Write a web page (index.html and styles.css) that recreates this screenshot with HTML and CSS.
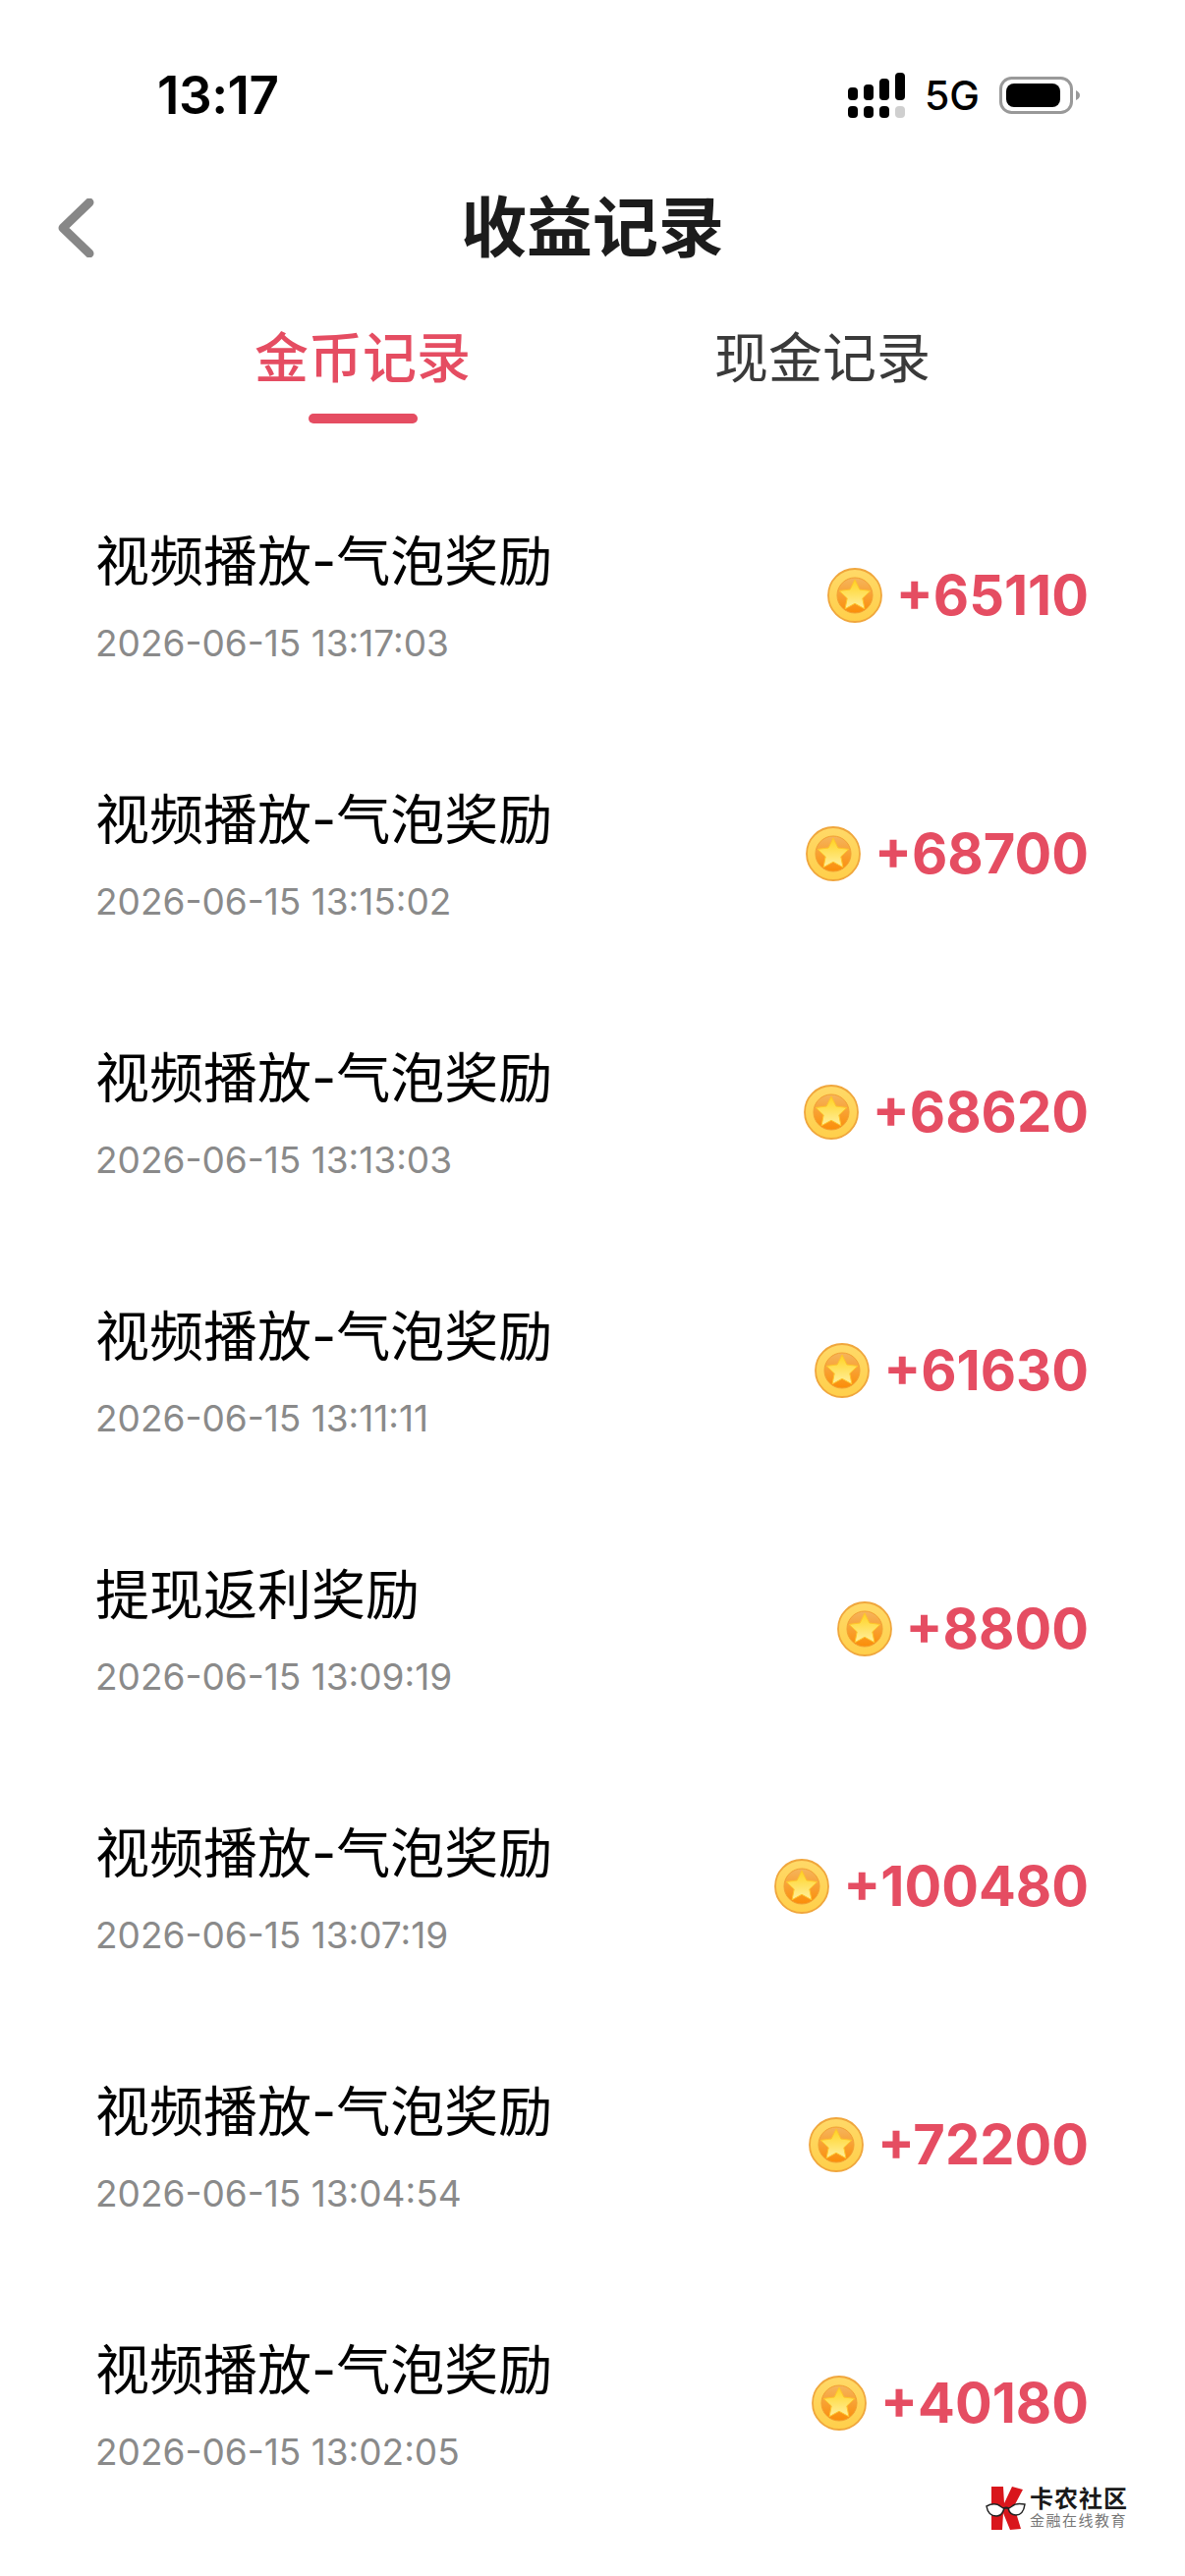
FILE: index.html
```html
<!DOCTYPE html>
<html lang="zh-CN">
<head>
    <meta charset="UTF-8">
    <meta name="viewport" content="width=device-width, initial-scale=1.0">
    <title>收益记录</title>
    <link rel="stylesheet" href="styles.css">
</head>
<body>
    <svg class="defs" width="0" height="0">
        <defs>
            <linearGradient id="coinRim" x1="0" y1="0" x2="0" y2="1">
                <stop offset="0" stop-color="#ffd968"/>
                <stop offset="1" stop-color="#ffcf4a"/>
            </linearGradient>
            <linearGradient id="coinCore" x1="0" y1="0" x2="0" y2="1">
                <stop offset="0" stop-color="#f5b45c"/>
                <stop offset="1" stop-color="#fb8d08"/>
            </linearGradient>
            <linearGradient id="coinStar" x1="0" y1="0" x2="0" y2="1">
                <stop offset="0" stop-color="#ffd21f"/>
                <stop offset="1" stop-color="#fff0a0"/>
            </linearGradient>
            <symbol id="coin" viewBox="0 0 56 56">
                <circle cx="28" cy="28" r="27" fill="url(#coinRim)" stroke="#f0a63c" stroke-width="1.8"/>
                <circle cx="28" cy="28" r="18" fill="url(#coinCore)" stroke="#f3a033" stroke-width="1"/>
                <path d="M28 12l4.800 10 11 1.400-8 7.500 2.100 10.800-9.900-5.400-9.900 5.400 2.100-10.800-8-7.500 11-1.400z" fill="url(#coinStar)" stroke="#ffc62a" stroke-width="1" stroke-linejoin="round"/>
            </symbol>
        </defs>
    </svg>

    <div class="status-bar">
        <span class="time">13:17</span>
        <div class="status-icons">
            <svg class="signal" width="60" height="46" viewBox="0 0 60 46">
                <rect x="0" y="15" width="10" height="13" rx="4"/>
                <rect x="16" y="12" width="10" height="16" rx="4"/>
                <rect x="32" y="6" width="10" height="22" rx="4"/>
                <rect x="48" y="0" width="10" height="28" rx="4"/>
                <rect x="0" y="34" width="10" height="12" rx="4"/>
                <rect x="16" y="34" width="10" height="12" rx="4"/>
                <rect x="32" y="34" width="10" height="12" rx="4"/>
                <rect x="48" y="34" width="10" height="12" rx="4" fill="#cfcfcf"/>
            </svg>
            <span class="network">5G</span>
            <svg class="battery" width="82" height="38" viewBox="0 0 82 38">
                <rect x="1.500" y="1.500" width="72" height="35" rx="11" fill="none" stroke="#999" stroke-width="3"/>
                <rect x="7" y="7" width="55" height="24" rx="8" fill="#000"/>
                <path d="M78 14c2.500 1 4 3 4 5s-1.500 4-4 5z" fill="#999"/>
            </svg>
        </div>
    </div>

    <div class="header">
        <svg class="back" width="38" height="60" viewBox="0 0 38 60">
            <path d="M33 4L6 30l27 26" fill="none" stroke="#878787" stroke-width="9" stroke-linecap="round" stroke-linejoin="round"/>
        </svg>
        <h1>收益记录</h1>
    </div>

    <div class="tabs">
        <div class="tab active">金币记录</div>
        <div class="tab">现金记录</div>
    </div>

    <div class="list">
        <div class="row">
            <div class="info">
                <div class="name">视频播放-气泡奖励</div>
                <div class="date">2026-06-15 13:17:03</div>
            </div>
            <div class="amount"><svg class="coin"><use href="#coin"/></svg>+65110</div>
        </div>
        <div class="row">
            <div class="info">
                <div class="name">视频播放-气泡奖励</div>
                <div class="date">2026-06-15 13:15:02</div>
            </div>
            <div class="amount"><svg class="coin"><use href="#coin"/></svg>+68700</div>
        </div>
        <div class="row">
            <div class="info">
                <div class="name">视频播放-气泡奖励</div>
                <div class="date">2026-06-15 13:13:03</div>
            </div>
            <div class="amount"><svg class="coin"><use href="#coin"/></svg>+68620</div>
        </div>
        <div class="row">
            <div class="info">
                <div class="name">视频播放-气泡奖励</div>
                <div class="date">2026-06-15 13:11:11</div>
            </div>
            <div class="amount"><svg class="coin"><use href="#coin"/></svg>+61630</div>
        </div>
        <div class="row">
            <div class="info">
                <div class="name">提现返利奖励</div>
                <div class="date">2026-06-15 13:09:19</div>
            </div>
            <div class="amount"><svg class="coin"><use href="#coin"/></svg>+8800</div>
        </div>
        <div class="row">
            <div class="info">
                <div class="name">视频播放-气泡奖励</div>
                <div class="date">2026-06-15 13:07:19</div>
            </div>
            <div class="amount"><svg class="coin"><use href="#coin"/></svg>+100480</div>
        </div>
        <div class="row">
            <div class="info">
                <div class="name">视频播放-气泡奖励</div>
                <div class="date">2026-06-15 13:04:54</div>
            </div>
            <div class="amount"><svg class="coin"><use href="#coin"/></svg>+72200</div>
        </div>
        <div class="row">
            <div class="info">
                <div class="name">视频播放-气泡奖励</div>
                <div class="date">2026-06-15 13:02:05</div>
            </div>
            <div class="amount"><svg class="coin"><use href="#coin"/></svg>+40180</div>
        </div>
    </div>

    <div class="watermark">
        <svg class="wm-logo" width="42" height="46" viewBox="0 0 42 46">
            <path d="M6 1h12l1 17 8-17 11 3-9 17 7 23-11 1-7-17-1 17H6z" fill="#d9161c"/>
            <path d="M1 21c5-3 11-3 14 0l3 2c2-1 4-1 6 0l3-2c3-3 8-3 13-2-1 7-4 11-9 11-4 0-7-3-8-7-1 0-3 0-4 0-1 4-3 8-8 8-6 0-9-4-10-10z" fill="#fff" stroke="#222" stroke-width="1.500"/>
        </svg>
        <div class="wm-text">
            <div class="wm-name">卡农社区</div>
            <div class="wm-sub">金融在线教育</div>
        </div>
    </div>
</body>
</html>
```

FILE: styles.css
```css
* {
    box-sizing: border-box;
}
html, body {
    height: 2622px;
}
body {
    margin: 0;
    overflow: hidden;
    position: relative;
    background-color: #fff;
    font-family: Inter, "Noto Sans CJK SC", sans-serif;
    color: #000;
}
.defs {
    position: absolute;
}
.status-bar {
    height: 180px;
    padding: 14px 107px 0 160px;
    display: flex;
    align-items: center;
    justify-content: space-between;
}
.time {
    font-size: 53px;
    font-weight: 600;
    letter-spacing: -0.5px;
}
.status-icons {
    display: flex;
    align-items: center;
}
.network {
    margin-left: 18px;
    margin-right: 20px;
    font-size: 41px;
    font-weight: 500;
}
.header {
    height: 104px;
    position: relative;
    display: flex;
    align-items: center;
    justify-content: center;
}
.back {
    position: absolute;
    left: 58px;
    top: 22px;
}
h1 {
    margin: 0;
    font-size: 67px;
    font-weight: 700;
    line-height: 104px;
    color: #1c1c1c;
}
.tabs {
    padding-top: 40px;
    display: grid;
    grid-template-columns: 468px 468px;
    justify-content: center;
}
.tab {
    display: flex;
    flex-direction: column;
    align-items: center;
    height: 107px;
    font-size: 55px;
    line-height: 80px;
    color: #3a3a3a;
}
.tab.active {
    font-weight: 500;
    color: #e54d62;
}
.tab.active::after {
    content: "";
    width: 111px;
    height: 10px;
    margin-top: 17px;
    border-radius: 5px;
    background-color: #e54d62;
}
.list {
    margin-top: 51px;
}
.row {
    height: 262.9px;
    padding: 0 98px 0 97px;
    display: flex;
    align-items: center;
    justify-content: space-between;
}
.info {
    padding-bottom: 13px;
}
.name {
    font-size: 55px;
    line-height: 70px;
}
.date {
    margin-top: 27px;
    font-size: 37px;
    line-height: 44px;
    color: #8a8a8a;
}
.amount {
    display: flex;
    align-items: center;
    margin-bottom: 15px;
    font-size: 56px;
    font-weight: 700;
    line-height: 60px;
    color: #e54d62;
}
.coin {
    width: 56px;
    height: 56px;
    margin-right: 14px;
}
.watermark {
    position: absolute;
    left: 1003px;
    top: 2530px;
    display: flex;
    align-items: center;
    gap: 3px;
}
.wm-name {
    font-size: 24px;
    font-weight: 700;
    line-height: 26px;
    letter-spacing: 1px;
    color: #1a1a1a;
}
.wm-sub {
    font-size: 15px;
    line-height: 18px;
    letter-spacing: 1.500px;
    color: #777;
}
```
